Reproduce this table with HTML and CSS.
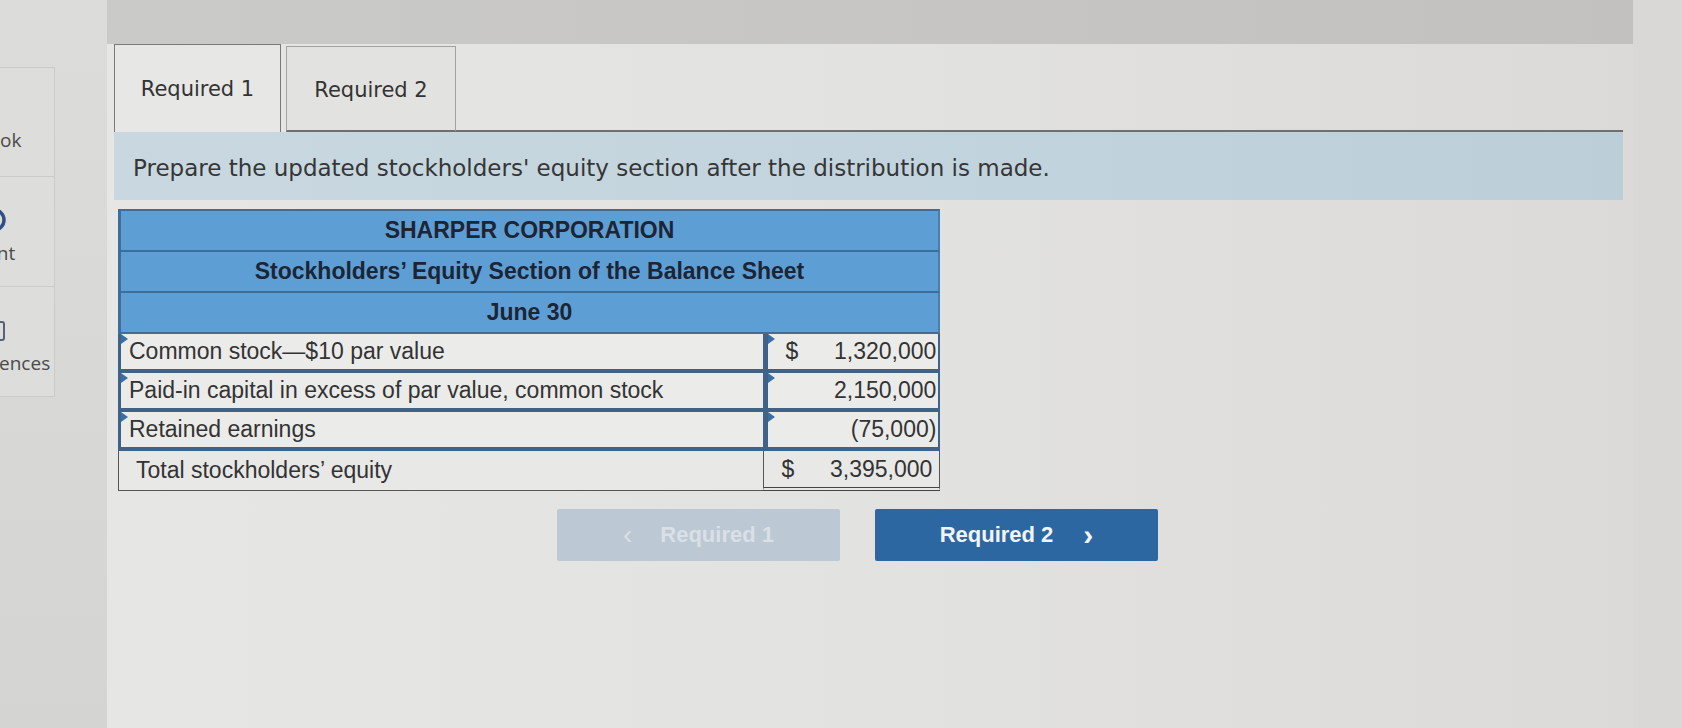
FILE: index.html
```html
<!DOCTYPE html>
<html lang="en">
<head>
<meta charset="utf-8">
<title>Required 1</title>
<link rel="stylesheet" href="styles.css">
</head>
<body>
<div class="app">
  <aside class="sidebar">
    <div class="card card-first"><span class="card-label">Ebook</span></div>
    <div class="card">
      <svg class="card-icon" width="28" height="28" viewBox="0 0 28 28"><circle cx="14" cy="14" r="10" fill="none" stroke="#2f4f86" stroke-width="3.5"/><rect x="9" y="11" width="10" height="6" fill="#2f4f86"/></svg>
      <span class="card-label">Print</span>
    </div>
    <div class="card">
      <svg class="card-icon" width="28" height="30" viewBox="0 0 28 30"><rect x="4" y="8" width="20" height="18" rx="2" fill="none" stroke="#55607a" stroke-width="2"/><path d="M9 8 V4 H19 V8" fill="none" stroke="#55607a" stroke-width="2"/></svg>
      <span class="card-label card-label-wide">References</span>
    </div>
  </aside>

  <main class="main">
    <div class="topbar"></div>
    <div class="content">
      <div class="tabs">
        <div class="tab tab-active">Required 1</div>
        <div class="tab tab-idle">Required 2</div>
        <div class="tab-fill"></div>
      </div>
      <div class="bar">Prepare the updated stockholders' equity section after the distribution is made.</div>

      <table class="sheet">
        <thead>
          <tr><th colspan="2">SHARPER CORPORATION</th></tr>
          <tr><th colspan="2">Stockholders’ Equity Section of the Balance Sheet</th></tr>
          <tr><th colspan="2">June 30</th></tr>
        </thead>
        <tbody>
          <tr class="input-row">
            <td class="label"><span class="mark"></span>Common stock—$10 par value</td>
            <td class="amt"><span class="mark"></span><span class="cur">$</span><span class="num">1,320,000</span></td>
          </tr>
          <tr class="input-row">
            <td class="label"><span class="mark"></span>Paid-in capital in excess of par value, common stock</td>
            <td class="amt"><span class="mark"></span><span class="cur"></span><span class="num">2,150,000</span></td>
          </tr>
          <tr class="input-row">
            <td class="label"><span class="mark"></span>Retained earnings</td>
            <td class="amt"><span class="mark"></span><span class="cur"></span><span class="num">(75,000)</span></td>
          </tr>
          <tr class="total-row">
            <td class="label">Total stockholders’ equity</td>
            <td class="amt"><span class="cur">$</span><span class="num">3,395,000</span></td>
          </tr>
        </tbody>
      </table>

      <div class="nav">
        <button class="btn btn-prev" disabled><span class="chev">‹</span>Required 1</button>
        <button class="btn btn-next">Required 2<span class="chev">›</span></button>
      </div>
    </div>
  </main>
  <div class="edge"></div>
</div>
</body>
</html>
```

FILE: styles.css
```css
html, body {
  margin: 0;
  padding: 0;
}
body {
  width: 1682px;
  height: 728px;
  overflow: hidden;
  background: #d6d6d4;
  font-family: "DejaVu Sans", "Liberation Sans", sans-serif;
  color: #333;
}
.app {
  display: flex;
  height: 728px;
}

/* sidebar */
.sidebar {
  width: 107px;
  flex: none;
  padding-top: 67px;
  box-sizing: border-box;
  overflow: hidden;
  background: linear-gradient(180deg, #dcdcda, #d4d4d2);
}
.card {
  width: 122px;
  margin-left: -67px;
  height: 110px;
  box-sizing: border-box;
  border: 1px solid #cbcbc9;
  border-top: none;
  background: #dddddb;
  display: flex;
  flex-direction: column;
  align-items: center;
  justify-content: flex-end;
  padding-bottom: 20px;
  gap: 6px;
}
.card-first {
  border-top: 1px solid #cbcbc9;
  justify-content: center;
  padding-bottom: 0;
  padding-top: 36px;
}
.card-label {
  font-family: "Open Sans", sans-serif;
  font-size: 19px;
  color: #4a4a4a;
  white-space: nowrap;
}
.card-label-wide {
  margin-left: 14px;
}
.card-icon {
  display: block;
}

/* main panel */
.main {
  width: 1526px;
  flex: none;
  background: linear-gradient(90deg, #e6e6e4 0%, #e2e2e0 50%, #dbdad8 100%);
}
.edge {
  flex: 1;
  background: #d9d8d6;
}
.topbar {
  height: 44px;
  background: linear-gradient(90deg, #cacac8, #c2c1bf);
}
.content {
  padding: 0 10px 0 7px;
}

/* tabs */
.tabs {
  display: flex;
  align-items: flex-end;
  height: 88px;
}
.tab {
  box-sizing: border-box;
  display: flex;
  align-items: center;
  justify-content: center;
  font-size: 21px;
  color: #333;
}
.tab-active {
  width: 167px;
  height: 88px;
  border: 1px solid #7a7a7a;
  border-bottom: none;
  background: #e7e7e5;
}
.tab-idle {
  width: 170px;
  height: 86px;
  margin-left: 5px;
  border: 1px solid #a2a2a0;
  border-bottom: 2px solid #6f6f6f;
  background: #e2e2e0;
  padding-top: 2px;
}
.tab-fill {
  flex: 1;
  height: 2px;
  background: #6f6f6f;
}

/* instruction bar */
.bar {
  height: 68px;
  box-sizing: border-box;
  padding-left: 19px;
  padding-top: 4px;
  display: flex;
  align-items: center;
  background: linear-gradient(90deg, #c9d8e0, #c1d3dd 60%, #bccfd9);
  font-size: 23px;
  color: #363636;
}

/* table */
.sheet {
  margin: 9px 0 0 4px;
  width: 822px;
  border-collapse: separate;
  border-spacing: 0;
  font-family: "Liberation Sans", Arial, sans-serif;
  font-size: 23px;
  color: #333;
}
.sheet th {
  height: 39px;
  padding: 0;
  background: #5d9fd5;
  border-bottom: 2px solid #3d6e9b;
  font-weight: bold;
  font-size: 23px;
  color: #1d2535;
  text-align: center;
}
.sheet thead tr:first-child th {
  border-top: 2px solid #3d6e9b;
}
.sheet th:first-child {
  border-left: 3px solid #3d6e9b;
  border-right: 2px solid #4a7eab;
}
.sheet td {
  position: relative;
  padding: 0;
  height: 35px;
  background: #ebebea;
}
.input-row td {
  border-bottom: 4px solid #3e6288;
}
.input-row .label {
  border-left: 3px solid #3e6288;
  padding-left: 8px;
}
.input-row .amt {
  border-left: 5px solid #3e6288;
  border-right: 2px solid #3e6288;
}
.sheet .label {
  width: 633px;
  text-align: left;
}
.amt {
  width: 170px;
}
.amt .cur {
  display: inline-block;
  width: 34px;
  padding-left: 17px;
  box-sizing: border-box;
}
.amt .num {
  display: inline-block;
  width: 134px;
  text-align: right;
}
.total-row td {
  height: 36px;
  background: #e8e8e7;
  border-bottom: 1px solid #555;
}
.total-row .label {
  border-left: 1px solid #555;
  padding-left: 17px;
}
.total-row .amt {
  border-left: 1px solid #555;
  border-right: 1px solid #555;
  border-bottom: 4px double #444;
}
.mark {
  position: absolute;
  left: 0;
  top: 0;
  width: 0;
  height: 0;
  border-top: 5px solid transparent;
  border-bottom: 5px solid transparent;
  border-left: 7px solid #3b6fa3;
}

/* nav buttons */
.nav {
  display: flex;
  gap: 35px;
  margin-top: 18px;
  padding-left: 443px;
}
.btn {
  width: 283px;
  height: 52px;
  border: none;
  border-radius: 2px;
  font-family: "Liberation Sans", Arial, sans-serif;
  font-weight: bold;
  font-size: 22px;
  display: flex;
  align-items: center;
  justify-content: center;
  gap: 0;
}
.btn-prev {
  background: #bcc8d4;
  color: #d9e0e6;
}
.btn-prev .chev {
  font-weight: normal;
  font-size: 28px;
  margin-right: 28px;
}
.btn-next {
  background: #2c67a2;
  color: #f2f4f7;
}
.btn-next .chev {
  font-size: 30px;
  margin-left: 30px;
}
```
